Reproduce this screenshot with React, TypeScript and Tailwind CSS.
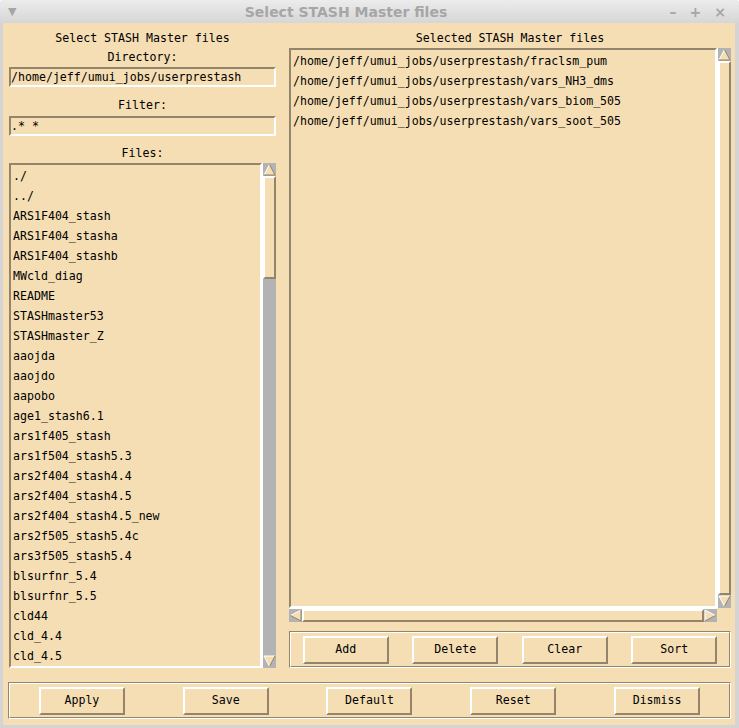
import React from "react";

const mono = "font-['DejaVu_Sans_Mono',monospace] text-[11.6px] text-black";
const sunken = "border-2 border-t-[#93856b] border-l-[#93856b] border-b-white border-r-white";
const raised = "border-2 border-t-white border-l-white border-b-[#93856b] border-r-[#93856b]";

const files = [
  "./",
  "../",
  "ARS1F404_stash",
  "ARS1F404_stasha",
  "ARS1F404_stashb",
  "MWcld_diag",
  "README",
  "STASHmaster53",
  "STASHmaster_Z",
  "aaojda",
  "aaojdo",
  "aapobo",
  "age1_stash6.1",
  "ars1f405_stash",
  "ars1f504_stash5.3",
  "ars2f404_stash4.4",
  "ars2f404_stash4.5",
  "ars2f404_stash4.5_new",
  "ars2f505_stash5.4c",
  "ars3f505_stash5.4",
  "blsurfnr_5.4",
  "blsurfnr_5.5",
  "cld44",
  "cld_4.4",
  "cld_4.5",
];

const selected = [
  "/home/jeff/umui_jobs/userprestash/fraclsm_pum",
  "/home/jeff/umui_jobs/userprestash/vars_NH3_dms",
  "/home/jeff/umui_jobs/userprestash/vars_biom_505",
  "/home/jeff/umui_jobs/userprestash/vars_soot_505",
];

function Arrow({ dir }: { dir: "up" | "down" | "left" | "right" }) {
  // wheat triangle with a light and a dark edge, on the grey trough
  const tri = {
    up: { pts: "6.5,1.5 12,12 1,12", light: "M1,12 L6.5,1.5", dark: "M6.5,1.5 L12,12 L1,12" },
    down: { pts: "1,1 12,1 6.5,11.5", light: "M1,1 L12,1 M1,1 L6.5,11.5", dark: "M12,1 L6.5,11.5" },
    left: { pts: "1.5,6.5 12,1 12,12", light: "M1.5,6.5 L12,1", dark: "M12,1 L12,12 L1.5,6.5" },
    right: { pts: "1,1 11.5,6.5 1,12", light: "M1,12 L1,1 L11.5,6.5", dark: "M11.5,6.5 L1,12" },
  }[dir];
  return (
    <svg width="13" height="13" viewBox="0 0 13 13" className="shrink-0 block">
      <polygon points={tri.pts} fill="#f5deb3" />
      <path d={tri.light} stroke="#ffffff" strokeWidth="1" fill="none" />
      <path d={tri.dark} stroke="#93856b" strokeWidth="1" fill="none" />
    </svg>
  );
}

function Thumb({ className }: { className: string }) {
  return <div className={`bg-[#f5deb3] ${raised} ${className}`} />;
}

function Button({ label }: { label: string }) {
  return (
    <button
      className={`w-[86px] h-[28px] bg-[#f5deb3] ${raised} ${mono} flex items-center justify-center`}
    >
      {label}
    </button>
  );
}

function Groove({ children, className }: { children: React.ReactNode; className: string }) {
  return (
    <div
      className={`border border-t-[#93856b] border-l-[#93856b] border-b-white border-r-white ${className}`}
    >
      <div className="h-full border border-t-white border-l-white border-b-[#93856b] border-r-[#93856b]">
        {children}
      </div>
    </div>
  );
}

export default function App() {
  return (
    <div className="w-[739px] h-[728px] bg-[#d4d4d4] rounded-t-[4px] overflow-hidden flex flex-col">
      {/* title bar */}
      <div className="h-[23px] shrink-0 bg-gradient-to-b from-[#ececec] to-[#d6d6d6] flex items-center px-[8px] pt-[1px] font-['DejaVu_Sans',sans-serif] text-[#a6a6a6]">
        <span className="w-[60px] text-[11px]">▼</span>
        <div className="flex-1 text-center font-bold text-[14px]">Select STASH Master files</div>
        <div className="w-[107px] flex justify-end gap-[13px] text-[14px] font-bold pr-[5px]">
          <span>–</span>
          <span>+</span>
          <span>×</span>
        </div>
      </div>

      {/* body */}
      <div className={`flex-1 ml-[3px] mr-[4px] mb-[3px] bg-[#f5deb3] flex flex-col ${mono}`}>
        <div className="flex pt-[5px] pl-[6px] pr-[4px] gap-[13px] h-[645px]">
          {/* left column */}
          <div className="w-[267px] flex flex-col">
            <div className="h-[20px] leading-[20px] text-center">Select STASH Master files</div>
            <div className="h-[19px] leading-[19px] text-center">Directory:</div>
            <div className={`h-[20px] ${sunken} leading-[16px]`}>/home/jeff/umui_jobs/userprestash</div>
            <div className="mt-[8px] h-[21px] leading-[20px] text-center">Filter:</div>
            <div className={`h-[20px] ${sunken} leading-[16px]`}>.* *</div>
            <div className="mt-[7px] h-[20px] leading-[20px] text-center">Files:</div>
            <div className="h-[505px] flex">
              <div className={`flex-1 ${sunken} pt-[1px] pl-[2px] overflow-hidden`}>
                {files.map((f) => (
                  <div key={f} className="h-[20px] leading-[20px] whitespace-nowrap">
                    {f}
                  </div>
                ))}
              </div>
              <div className="w-[14px] bg-[#b3b3b3] border-l border-white flex flex-col">
                <Arrow dir="up" />
                <Thumb className="h-[103px]" />
                <div className="flex-1" />
                <Arrow dir="down" />
              </div>
            </div>
          </div>

          {/* right column */}
          <div className="flex-1 flex flex-col">
            <div className="h-[20px] leading-[20px] text-center">Selected STASH Master files</div>
            <div className="h-[560px] flex">
              <div className={`flex-1 ${sunken} pt-[1px] pl-[2px] overflow-hidden`}>
                {selected.map((f) => (
                  <div key={f} className="h-[20px] leading-[20px] whitespace-nowrap">
                    {f}
                  </div>
                ))}
              </div>
              <div className="w-[14px] bg-[#b3b3b3] border-l border-white flex flex-col">
                <Arrow dir="up" />
                <Thumb className="flex-1" />
                <Arrow dir="down" />
              </div>
            </div>
            <div className="h-[14px] flex">
              <div className="flex-1 bg-[#b3b3b3] border-t border-white flex">
                <Arrow dir="left" />
                <Thumb className="flex-1" />
                <Arrow dir="right" />
              </div>
              <div className="w-[14px]" />
            </div>
            <Groove className="mt-[9px] h-[37px]">
              <div className="h-full grid grid-cols-4 justify-items-center items-center">
                <Button label="Add" />
                <Button label="Delete" />
                <Button label="Clear" />
                <Button label="Sort" />
              </div>
            </Groove>
          </div>
        </div>

        {/* bottom button row */}
        <Groove className="mt-[14px] ml-[5px] mr-[4px] h-[37px]">
          <div className="h-full grid grid-cols-5 justify-items-center items-center">
            <Button label="Apply" />
            <Button label="Save" />
            <Button label="Default" />
            <Button label="Reset" />
            <Button label="Dismiss" />
          </div>
        </Groove>
      </div>
    </div>
  );
}
